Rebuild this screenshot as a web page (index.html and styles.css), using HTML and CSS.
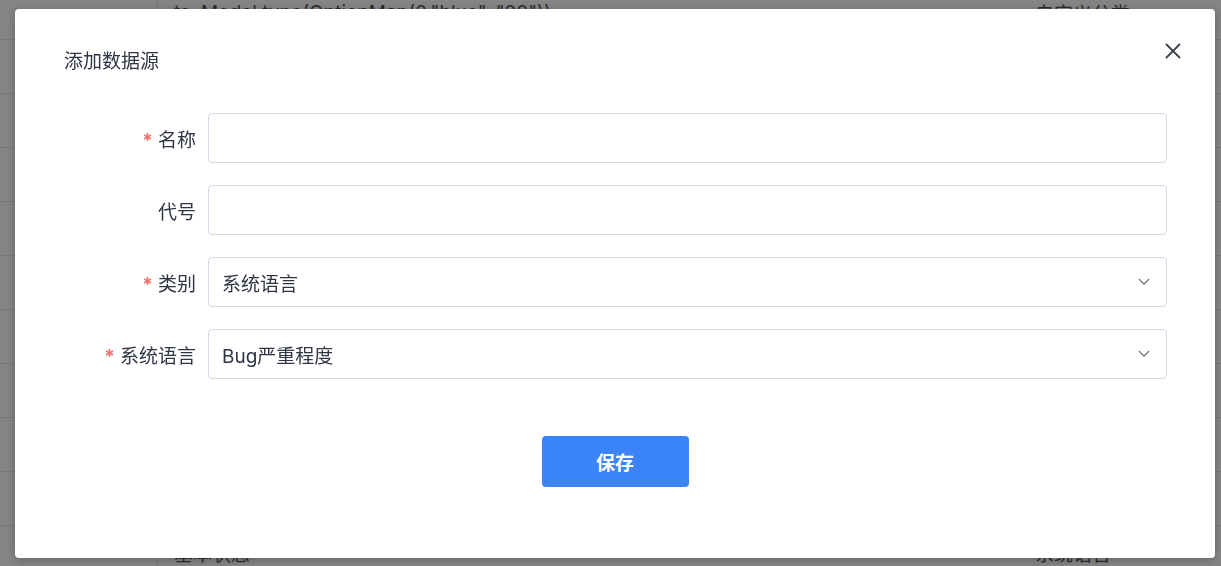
FILE: index.html
```html
<!DOCTYPE html>
<html lang="zh-CN">
<head>
  <meta charset="UTF-8" />
  <title>添加数据源</title>
  <meta name="viewport" content="width=device-width, initial-scale=1" />
  <link rel="stylesheet" href="styles.css">
</head>
<body>
  <!-- 背景页面 (被遮罩) -->
  <div class="page">
    <div class="row"><span class="col-a"></span><span class="col-b">ts: Model.type(OptionMap(0,"blue", "20"))</span><span class="col-c">自定义分类</span></div>
    <div class="row"><span class="col-a"></span><span class="col-b"></span><span class="col-c"></span></div>
    <div class="row"><span class="col-a"></span><span class="col-b"></span><span class="col-c"></span></div>
    <div class="row"><span class="col-a"></span><span class="col-b"></span><span class="col-c"></span></div>
    <div class="row"><span class="col-a"></span><span class="col-b"></span><span class="col-c"></span></div>
    <div class="row"><span class="col-a"></span><span class="col-b"></span><span class="col-c"></span></div>
    <div class="row"><span class="col-a"></span><span class="col-b"></span><span class="col-c"></span></div>
    <div class="row"><span class="col-a"></span><span class="col-b"></span><span class="col-c"></span></div>
    <div class="row"><span class="col-a"></span><span class="col-b"></span><span class="col-c"></span></div>
    <div class="row"><span class="col-a"></span><span class="col-b"></span><span class="col-c"></span></div>
    <div class="row"><span class="col-a"></span><span class="col-b">基本状态</span><span class="col-c">系统语言</span></div>
  </div>

  <div class="mask"></div>

  <div class="dialog">
    <div class="dialog-header">
      <span class="dialog-title">添加数据源</span>
      <button class="dialog-close" title="关闭">
        <svg width="16" height="16" viewBox="0 0 16 16"><path d="M1 1L15 15M15 1L1 15" stroke="#3a4150" stroke-width="1.8" fill="none"/></svg>
      </button>
    </div>

    <form class="form">
      <div class="form-item">
        <label class="form-label"><span class="req">*</span>名称</label>
        <div class="form-control"><input type="text" class="input" /></div>
      </div>
      <div class="form-item">
        <label class="form-label">代号</label>
        <div class="form-control"><input type="text" class="input" /></div>
      </div>
      <div class="form-item">
        <label class="form-label"><span class="req">*</span>类别</label>
        <div class="form-control select">
          <span class="select-value">系统语言</span>
          <svg class="arrow" width="12" height="8" viewBox="0 0 12 8"><path d="M1 1.2L6 6.2L11 1.2" stroke="#5b6170" stroke-width="1.2" fill="none"/></svg>
        </div>
      </div>
      <div class="form-item">
        <label class="form-label"><span class="req">*</span>系统语言</label>
        <div class="form-control select">
          <span class="select-value">Bug严重程度</span>
          <svg class="arrow" width="12" height="8" viewBox="0 0 12 8"><path d="M1 1.2L6 6.2L11 1.2" stroke="#5b6170" stroke-width="1.2" fill="none"/></svg>
        </div>
      </div>
      <div class="form-footer">
        <button type="button" class="btn-primary">保存</button>
      </div>
    </form>
  </div>
</body>
</html>
```

FILE: styles.css
```css
  * { box-sizing: border-box; }

  body {
    margin: 0;
    font-family: Inter, "Noto Sans CJK SC", sans-serif;
    background: #fff;
    color: #333a4a;
    overflow: hidden;
  }

  /* 背景表格 */
  .page {
    margin-top: -14px;
  }
  .row {
    display: flex;
    height: 54px;
    border-bottom: 1px solid #e4e6ec;
    align-items: center;
    font-size: 19px;
    color: #555;
  }
  .col-a { width: 158px; height: 100%; border-right: 1px solid #e4e6ec; }
  .col-b { flex: 1; padding-left: 16px; }
  .col-c { width: 186px; }

  .mask {
    position: fixed;
    inset: 0;
    background: rgba(0, 0, 0, 0.48);
  }

  /* 弹窗 */
  .dialog {
    position: fixed;
    left: 15px;
    top: 9px;
    width: 1200px;
    height: 549px;
    background: #fff;
    border-radius: 4px;
    box-shadow: 0 2px 10px rgba(0,0,0,0.25);
  }
  .dialog-header {
    padding: 41px 48px 0 49px;
    height: 74px;
  }
  .dialog-title {
    font-size: 19px;
    line-height: 24px;
    color: #2f3545;
  }
  .dialog-close {
    position: absolute;
    top: 34px;
    right: 34px;
    width: 16px;
    height: 16px;
    padding: 0;
    border: none;
    background: transparent;
    cursor: pointer;
    display: flex;
  }

  .form {
    margin-top: 30px;
    padding-right: 48px;
    display: flex;
    flex-direction: column;
    gap: 22px;
  }
  .form-item {
    display: flex;
    align-items: center;
    gap: 12px;
  }
  .form-label {
    width: 181px;
    text-align: right;
    font-size: 19px;
    color: #2f3545;
  }
  .req {
    color: #f56c6c;
    margin-right: 5px;
    font-size: 19px;
    font-weight: bold;
  }
  .form-control {
    flex: 1;
    height: 50px;
    border: 1px solid #d3d7e6;
    border-radius: 4px;
    display: flex;
    align-items: center;
  }
  .input {
    width: 100%;
    height: 100%;
    border: none;
    background: transparent;
    padding: 0 13px;
    font-size: 19px;
    font-family: inherit;
    outline: none;
  }
  .select {
    padding: 0 16px 0 13px;
    justify-content: space-between;
  }
  .select-value {
    font-size: 19px;
    color: #2f3545;
  }

  .form-footer {
    display: flex;
    justify-content: center;
    margin-top: 35px;
    padding-left: 48px;
  }
  .btn-primary {
    width: 147px;
    height: 51px;
    background: #3b84f7;
    color: #fff;
    border: none;
    border-radius: 4px;
    font-size: 19px;
    font-weight: bold;
    font-family: inherit;
    cursor: pointer;
  }
```
